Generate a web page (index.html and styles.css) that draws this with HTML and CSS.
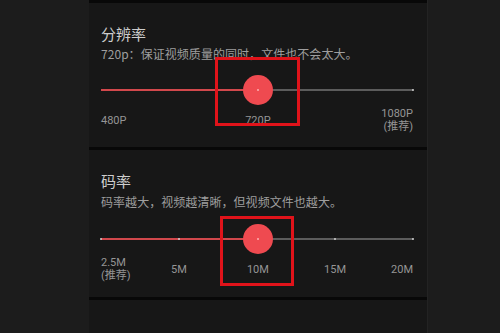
FILE: index.html
```html
<!DOCTYPE html>
<html lang="zh">
<head>
<meta charset="utf-8">
<link rel="stylesheet" href="styles.css">
</head>
<body>
<div class="page">
  <div class="column">
    <div class="sep"></div>
    <section class="card">
      <h2 class="title">分辨率</h2>
      <p class="desc">720p：保证视频质量的同时，文件也不会太大。</p>
      <div class="slider">
        <div class="track">
          <div class="fill" style="width:50.3%"></div>
        </div>
        <span class="tick" style="left:100%"></span>
        <span class="thumb" style="left:50.3%"><span class="dot"></span></span>
      </div>
      <div class="labels">
        <span class="lab first" style="left:0%">480P</span>
        <span class="lab" style="left:50.3%">720P</span>
        <span class="lab last" style="left:100%">1080P<br>(推荐)</span>
      </div>
    </section>
    <div class="sep"></div>
    <section class="card second">
      <h2 class="title">码率</h2>
      <p class="desc">码率越大，视频越清晰，但视频文件也越大。</p>
      <div class="slider">
        <div class="track">
          <div class="fill" style="width:50.3%"></div>
        </div>
        <span class="tick" style="left:0%"></span>
        <span class="tick" style="left:25%"></span>
        <span class="tick" style="left:75%"></span>
        <span class="tick" style="left:100%"></span>
        <span class="thumb" style="left:50.3%"><span class="dot"></span></span>
      </div>
      <div class="labels">
        <span class="lab first" style="left:0%">2.5M<br>(推荐)</span>
        <span class="lab" style="left:25%">5M</span>
        <span class="lab" style="left:50.3%">10M</span>
        <span class="lab" style="left:75%">15M</span>
        <span class="lab last" style="left:100%">20M</span>
      </div>
    </section>
    <div class="sep"></div>
    <section class="card short"></section>
  </div>
  <div class="mark mark1"></div>
  <div class="mark mark2"></div>
</div>
</body>
</html>
```
FILE: styles.css
```css
* { box-sizing: border-box; }
html, body { margin: 0; padding: 0; }
body {
  background: #1c1c1c;
  width: 500px;
  height: 333px;
  overflow: hidden;
  font-family: "Noto Sans CJK SC", "Noto Sans", sans-serif;
}
.page {
  position: relative;
  width: 500px;
  height: 333px;
}
.column {
  margin-left: 89px;
  width: 339px;
  display: flex;
  flex-direction: column;
  border-right: 1px solid #232323;
}
.sep {
  height: 3px;
  background: #080808;
}
.card {
  height: 144px;
  background: #171717;
  padding: 21px 14px 0 12px;
  display: flex;
  flex-direction: column;
}
.card.second { height: 147px; }
.card.short { height: 40px; }
.title {
  margin: 0;
  font-size: 15px;
  line-height: 20px;
  font-weight: 400;
  color: #cdcdcd;
}
.desc {
  margin: 2px 0 0;
  font-size: 12px;
  line-height: 16px;
  letter-spacing: 0.05px;
  color: #9e9e9e;
  white-space: nowrap;
}
.second .desc { margin-top: 3px; }
.second .slider { margin-top: 14px; }
.slider {
  position: relative;
  height: 30px;
  margin-top: 13px;
  display: flex;
  align-items: center;
}
.track {
  width: 100%;
  height: 2px;
  background: #5c5c5c;
}
.fill {
  height: 2px;
  background: #d2484c;
}
.tick {
  position: absolute;
  top: 14px;
  width: 2px;
  height: 2px;
  margin-left: -1px;
  background: #cfcfcf;
  border-radius: 1px;
}
.thumb {
  position: absolute;
  top: 0;
  width: 30px;
  height: 30px;
  margin-left: -15px;
  border-radius: 50%;
  background: #ef4a50;
  display: flex;
  align-items: center;
  justify-content: center;
}
.dot {
  width: 2px;
  height: 2px;
  border-radius: 50%;
  background: #ffb0b0;
}
.labels {
  position: relative;
  height: 26px;
  margin-top: 2px;
}
.lab {
  position: absolute;
  top: 0;
  height: 26px;
  transform: translateX(-50%);
  display: flex;
  align-items: center;
  font-family: "Roboto", "Noto Sans CJK SC", sans-serif;
  font-size: 11px;
  line-height: 13px;
  color: #959595;
  white-space: nowrap;
}
.lab.first { transform: none; text-align: left; }
.lab.last { transform: translateX(-100%); text-align: right; }
.mark {
  position: absolute;
  border: 3px solid #e0131a;
}
.mark1 { left: 215px; top: 57px; width: 85px; height: 69px; }
.mark2 { left: 220px; top: 216px; width: 74px; height: 70px; }
```
